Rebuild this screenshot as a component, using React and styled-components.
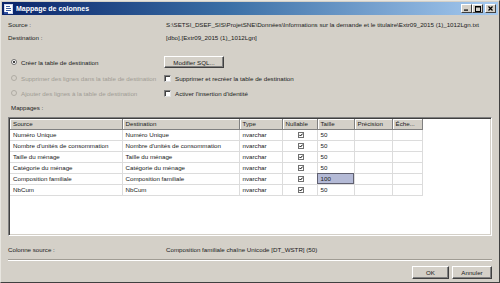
import React from 'react';
import styled, { createGlobalStyle } from 'styled-components';

const GlobalStyle = createGlobalStyle`
  html, body {
    margin: 0;
    padding: 0;
    background: #d4d0c8;
  }
  * {
    box-sizing: border-box;
  }
`;

const Window = styled.div`
  width: 500px;
  height: 283px;
  background: #d4d0c8;
  border: 1px solid;
  border-color: #e8e6e0 #404040 #404040 #e8e6e0;
  padding: 1px;
  display: flex;
  flex-direction: column;
  font-family: "Liberation Sans", Arial, sans-serif;
  font-size: 6.2px;
  color: #202020;
  overflow: hidden;
`;

const TitleBar = styled.div`
  height: 13px;
  flex: none;
  display: flex;
  align-items: center;
  padding: 0 2px 0 2px;
  background: linear-gradient(90deg, #0a246a 0%, #3a6ea5 45%, #a6caf0 100%);
`;

const TitleText = styled.span`
  color: #fff;
  font-weight: bold;
  font-size: 7px;
  margin-left: 3px;
  flex: 1;
`;

const Controls = styled.div`
  display: flex;
`;

const CtrlButton = styled.div`
  width: 11px;
  height: 9px;
  margin-left: ${p => (p.$gap ? '2px' : '0')};
  background: #d4d0c8;
  border: 1px solid;
  border-color: #fff #404040 #404040 #fff;
  display: flex;
  align-items: center;
  justify-content: center;
`;

const Content = styled.div`
  flex: 1;
  display: flex;
  flex-direction: column;
  padding: 0 6px;
`;

const InfoRow = styled.div`
  display: grid;
  grid-template-columns: 158px 1fr;
  height: 10px;
  align-items: center;
  margin-top: ${p => p.$mt || 0}px;
  white-space: nowrap;
`;

const OptionRow = styled.div`
  display: grid;
  grid-template-columns: 156px 1fr;
  align-items: center;
  height: ${p => p.$h || 10}px;
  margin-top: ${p => p.$mt || 0}px;
  white-space: nowrap;
`;

const Option = styled.label`
  display: flex;
  align-items: center;
  gap: 4px;
  padding-left: ${p => p.$pl || 0}px;
  color: ${p => (p.$disabled ? '#a09c94' : '#202020')};
`;

const Radio = styled.span`
  width: 6px;
  height: 6px;
  border-radius: 50%;
  background: ${p => (p.$disabled ? '#d4d0c8' : '#fff')};
  border: 1px solid ${p => (p.$disabled ? '#b0aca4' : '#707070')};
  display: flex;
  align-items: center;
  justify-content: center;

  &::after {
    content: '';
    width: 2px;
    height: 2px;
    border-radius: 50%;
    background: ${p => (p.$checked ? '#000' : 'transparent')};
  }
`;

const Check = styled.span`
  width: 7px;
  height: 7px;
  background: #fff;
  border: 1px solid;
  border-color: #808080 #e0e0e0 #e0e0e0 #808080;
  box-shadow: inset 1px 1px 0 #404040;
`;

const PushButton = styled.button`
  font-family: inherit;
  font-size: 6.2px;
  color: #202020;
  background: #d4d0c8;
  width: ${p => p.$w}px;
  height: ${p => p.$h || 12}px;
  padding: 0;
  border: 1px solid;
  border-color: #fff #404040 #404040 #fff;
  box-shadow: inset -1px -1px 0 #808080;
`;

const SectionLabel = styled.div`
  height: 9px;
  display: flex;
  align-items: center;
  margin-top: 5px;
  padding-left: 3px;
`;

const TableFrame = styled.div`
  margin-top: 5px;
  height: 119px;
  background: #fff;
  border: 1px solid;
  border-color: #808080 #fff #fff #808080;
  box-shadow: inset 1px 1px 0 #404040, inset -1px -1px 0 #d4d0c8;
  padding: 1px;
  overflow: hidden;
`;

const Grid = styled.table`
  border-collapse: collapse;
  table-layout: fixed;
  font-size: 6.2px;
`;

const Th = styled.th`
  width: ${p => p.$w}px;
  height: 10px;
  padding: 0 0 0 3px;
  text-align: left;
  font-weight: normal;
  white-space: nowrap;
  overflow: hidden;
  color: #202020;
  background: #d4d0c8;
  border-right: 1px solid #808080;
  border-bottom: 1px solid #808080;
  box-shadow: inset 1px 1px 0 #fff;
`;

const Td = styled.td`
  height: 11px;
  padding: 0 0 0 3px;
  white-space: nowrap;
  overflow: hidden;
  text-align: ${p => (p.$center ? 'center' : 'left')};
  border-right: 1px solid #dcdcdc;
  border-bottom: 1px solid #dcdcdc;
  background: ${p => (p.$selected ? '#b4bad6' : '#fff')};
  outline: ${p => (p.$selected ? '1px solid #606070' : 'none')};
  outline-offset: -1px;
`;

const MiniCheck = styled.span`
  display: inline-flex;
  align-items: center;
  justify-content: center;
  width: 6px;
  height: 6px;
  border: 1px solid #707070;
  vertical-align: middle;
`;

const Separator = styled.div`
  margin-top: 5px;
  height: 2px;
  border-top: 1px solid #a09c94;
  border-bottom: 1px solid #fff;
`;

const ButtonRow = styled.div`
  display: flex;
  justify-content: flex-end;
  gap: 3px;
  margin-top: 5px;
`;

const WindowIcon = () => (
  <svg width="9" height="10" viewBox="0 0 9 10">
    <rect x="0.5" y="0.5" width="8" height="9" fill="#fff" stroke="#d0d8f0" />
    <rect x="2" y="2" width="4" height="1" fill="#4060a0" />
    <rect x="2" y="4" width="5" height="1" fill="#4060a0" />
    <rect x="2" y="6" width="5" height="1" fill="#4060a0" />
    <rect x="0" y="8" width="4" height="2" fill="#3050a0" />
  </svg>
);

const columns = [
  { label: 'Source', w: 112 },
  { label: 'Destination', w: 117 },
  { label: 'Type', w: 43 },
  { label: 'Nullable', w: 35 },
  { label: 'Taille', w: 37 },
  { label: 'Précision', w: 38 },
  { label: 'Éche...', w: 30 },
];

const rows = [
  ['Numéro Unique', 'Numéro Unique', '50'],
  ["Nombre d'unités de consommation", "Nombre d'unités de consommation", '50'],
  ['Taille du ménage', 'Taille du ménage', '50'],
  ['Catégorie du ménage', 'Catégorie du ménage', '50'],
  ['Composition familiale', 'Composition familiale', '100'],
  ['NbCum', 'NbCum', '50'],
];

export default function App() {
  return (
    <>
      <GlobalStyle />
      <Window>
        <TitleBar>
          <WindowIcon />
          <TitleText>Mappage de colonnes</TitleText>
          <Controls>
            <CtrlButton>
              <svg width="5" height="5" viewBox="0 0 5 5"><rect x="0" y="3.5" width="4" height="1.2" fill="#000" /></svg>
            </CtrlButton>
            <CtrlButton>
              <svg width="6" height="6" viewBox="0 0 6 6"><rect x="0.5" y="0.5" width="5" height="5" fill="none" stroke="#000" /><rect x="0" y="0" width="6" height="1.5" fill="#000" /></svg>
            </CtrlButton>
            <CtrlButton $gap>
              <svg width="5" height="5" viewBox="0 0 5 5"><path d="M0.5 0.5 L4.5 4.5 M4.5 0.5 L0.5 4.5" stroke="#000" strokeWidth="1.2" /></svg>
            </CtrlButton>
          </Controls>
        </TitleBar>
        <Content>
          <InfoRow $mt={4}>
            <span>Source :</span>
            <span>S:\SETSI_DSEF_SIS\ProjetSNE\Données\Informations sur la demande et le titulaire\Extr09_2015 (1)_1012Lgn.txt</span>
          </InfoRow>
          <InfoRow $mt={3}>
            <span>Destination :</span>
            <span>[dbo].[Extr09_2015 (1)_1012Lgn]</span>
          </InfoRow>
          <OptionRow $h={12} $mt={14}>
            <Option $pl={3}><Radio $checked />Créer la table de destination</Option>
            <PushButton $w={60}>Modifier SQL...</PushButton>
          </OptionRow>
          <OptionRow $h={10} $mt={5}>
            <Option $pl={3} $disabled><Radio $disabled />Supprimer des lignes dans la table de destination</Option>
            <Option><Check />Supprimer et recréer la table de destination</Option>
          </OptionRow>
          <OptionRow $h={10} $mt={5}>
            <Option $pl={3} $disabled><Radio $disabled />Ajouter des lignes à la table de destination</Option>
            <Option><Check />Activer l'insertion d'identité</Option>
          </OptionRow>
          <SectionLabel>Mappages :</SectionLabel>
          <TableFrame>
            <Grid>
              <thead>
                <tr>
                  {columns.map(c => (
                    <Th key={c.label} $w={c.w}>{c.label}</Th>
                  ))}
                </tr>
              </thead>
              <tbody>
                {rows.map((r, i) => (
                  <tr key={i}>
                    <Td>{r[0]}</Td>
                    <Td>{r[1]}</Td>
                    <Td>nvarchar</Td>
                    <Td $center>
                      <MiniCheck>
                        <svg width="4" height="4" viewBox="0 0 4 4"><path d="M0.3 1.8 L1.5 3 L3.7 0.6" stroke="#000" strokeWidth="1" fill="none" /></svg>
                      </MiniCheck>
                    </Td>
                    <Td $selected={r[2] === '100'}>{r[2]}</Td>
                    <Td />
                    <Td />
                  </tr>
                ))}
              </tbody>
            </Grid>
          </TableFrame>
          <InfoRow $mt={8}>
            <span>Colonne source :</span>
            <span>Composition familiale chaîne Unicode [DT_WSTR] (50)</span>
          </InfoRow>
          <Separator />
          <ButtonRow>
            <PushButton $w={37} $h={13}>OK</PushButton>
            <PushButton $w={40} $h={13}>Annuler</PushButton>
          </ButtonRow>
        </Content>
      </Window>
    </>
  );
}
